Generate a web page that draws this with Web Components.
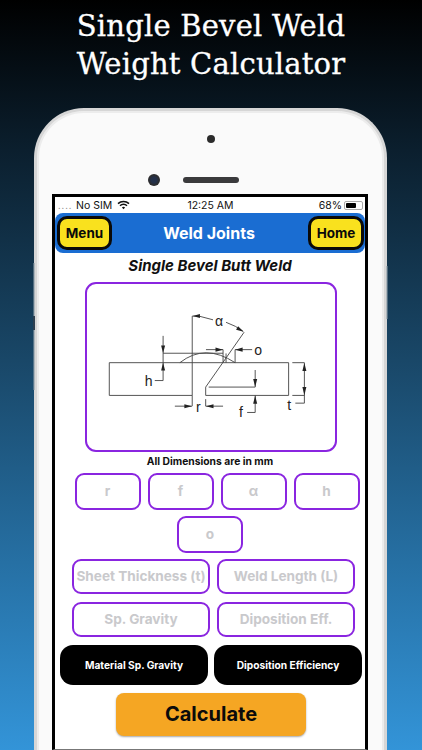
<!DOCTYPE html>
<html>
<head>
<meta charset="utf-8">
<style>
    html, body { margin: 0; padding: 0; }
    body { width: 422px; height: 750px; overflow: hidden; background: #000; font-family: "Inter", "Liberation Sans", sans-serif; }
</style>
</head>
<body>
<app-shot>
    <promo-title slot="title">Single Bevel Weld<br>Weight Calculator</promo-title>
    <phone-frame>
        <status-bar></status-bar>
        <nav-bar heading="Weld Joints"></nav-bar>
        <sheet-title>Single Bevel Butt Weld</sheet-title>
        <weld-diagram></weld-diagram>
        <sheet-note>All Dimensions are in mm</sheet-note>
        <field-row gap="7" top="4" nudge="14">
            <dim-field w="66" h="37">r</dim-field>
            <dim-field w="66" h="37">f</dim-field>
            <dim-field w="66" h="37">α</dim-field>
            <dim-field w="66" h="37">h</dim-field>
        </field-row>
        <field-row gap="7" top="6">
            <dim-field w="66" h="37">o</dim-field>
        </field-row>
        <field-row gap="7" top="6" nudge="7">
            <dim-field w="138" h="35">Sheet Thickness (t)</dim-field>
            <dim-field w="138" h="35">Weld Length (L)</dim-field>
        </field-row>
        <field-row gap="7" top="8" nudge="7">
            <dim-field w="138" h="35">Sp. Gravity</dim-field>
            <dim-field w="138" h="35">Diposition Eff.</dim-field>
        </field-row>
        <field-row gap="6" top="8" nudge="2">
            <pick-button>Material Sp. Gravity</pick-button>
            <pick-button>Diposition Efficiency</pick-button>
        </field-row>
        <field-row gap="0" top="8" nudge="2">
            <calc-button>Calculate</calc-button>
        </field-row>
    </phone-frame>
</app-shot>

<script>
class AppShot extends HTMLElement {
    constructor () {
        super();
        this.attachShadow({ mode: 'open' }).innerHTML = `
            <style>
                :host {
                    display: flex;
                    flex-direction: column;
                    width: 422px;
                    height: 750px;
                    overflow: hidden;
                    background: linear-gradient(180deg, #000 0%, #0b1f2e 20%, #1a4a6c 50%, #2670a4 75%, #3394d8 100%);
                }
                ::slotted(*) { flex: none; }
            </style>
            <slot name="title"></slot>
            <slot></slot>
        `;
    }
}

class PromoTitle extends HTMLElement {
    constructor () {
        super();
        this.attachShadow({ mode: 'open' }).innerHTML = `
            <style>
                :host {
                    display: block;
                    height: 108px;
                    box-sizing: border-box;
                    padding-top: 7px;
                    text-align: center;
                    color: #fff;
                    font-family: "DejaVu Serif", "Liberation Serif", serif;
                    font-size: 29px;
                    line-height: 38px;
                    letter-spacing: 0.2px;
                    -webkit-text-stroke: 0.3px #fff;
                }
            </style>
            <slot></slot>
        `;
    }
}

class PhoneFrame extends HTMLElement {
    constructor () {
        super();
        this.attachShadow({ mode: 'open' }).innerHTML = `
            <style>
                :host {
                    display: block;
                    position: relative;
                    width: 353px;
                    height: 700px;
                    margin-left: 34px;
                    box-sizing: border-box;
                    background: #fafafa;
                    border: 3px solid #d6d6d6;
                    border-bottom: 0;
                    border-radius: 50px 50px 0 0;
                    box-shadow: inset 0 0 0 2px #ececec;
                }
                .side { position: absolute; width: 2px; background: #8b9aa5; opacity: .55; }
                .left1 { left: -4px; top: 152px; height: 53px; }
                .left2 { left: -4px; top: 205px; height: 14px; background: #2d3f50; opacity: 1; }
                .left3 { left: -4px; top: 219px; height: 60px; }
                .right1 { right: -4px; top: 155px; height: 53px; }
                .bezel {
                    height: 83px;
                    box-sizing: border-box;
                    display: grid;
                    grid-template-columns: 1fr auto 1fr;
                    grid-template-rows: auto auto;
                    justify-items: center;
                    align-items: center;
                    padding-top: 15px;
                    row-gap: 14px;
                }
                .dot { grid-column: 2; width: 8px; height: 8px; border-radius: 50%; background: #2b2b2b; }
                .cam {
                    grid-column: 1;
                    grid-row: 2;
                    justify-self: end;
                    margin-right: 23px;
                    width: 12px;
                    height: 12px;
                    border-radius: 50%;
                    background: radial-gradient(circle, #23304a 0 30%, #2c2c2e 60%);
                }
                .speaker { grid-column: 2; grid-row: 2; width: 56px; height: 6px; border-radius: 3px; background: #3a3a3c; }
                .screen {
                    width: 316px;
                    height: 556px;
                    margin-left: 15px;
                    box-sizing: border-box;
                    background: #fff;
                    border: 3px solid #000;
                    border-bottom: 1px solid #777;
                    overflow: hidden;
                }
            </style>
            <div class="side left1"></div>
            <div class="side left2"></div>
            <div class="side left3"></div>
            <div class="side right1"></div>
            <div class="bezel">
                <div class="dot"></div>
                <div class="cam"></div>
                <div class="speaker"></div>
            </div>
            <div class="screen"><slot></slot></div>
        `;
    }
}

class StatusBar extends HTMLElement {
    constructor () {
        super();
        this.attachShadow({ mode: 'open' }).innerHTML = `
            <style>
                :host {
                    display: grid;
                    grid-template-columns: 1fr auto 1fr;
                    align-items: center;
                    height: 16px;
                    padding: 0 2px 0 3px;
                    font-size: 10.5px;
                    color: #111;
                }
                .left, .right { display: flex; align-items: center; gap: 3px; }
                .right { justify-content: flex-end; gap: 2px; }
                .dots { color: #999; font-size: 9px; width: 15px; letter-spacing: 1px; }
                .left svg { margin-left: 2px; }
                svg { display: block; }
                .batt { width: 19px; height: 9px; box-sizing: border-box; border: 1px solid #aaa; border-radius: 2px; padding: 1px; }
                .batt i { display: block; width: 68%; height: 100%; background: #000; border-radius: 1px; }
            </style>
            <div class="left">
                <span class="dots">....</span><span>No SIM</span>
                <svg width="13" height="10" viewBox="0 0 13 10"><path d="M1 3.6a8 8 0 0 1 11 0M3 5.8a5 5 0 0 1 7 0" fill="none" stroke="#111" stroke-width="1.5"/><path d="M4.9 7.4a2.4 2.4 0 0 1 3.2 0L6.5 9.2z" fill="#111"/></svg>
            </div>
            <div>12:25 AM</div>
            <div class="right"><span>68%</span><div class="batt"><i></i></div></div>
        `;
    }
}

class NavBar extends HTMLElement {
    constructor () {
        super();
        this.attachShadow({ mode: 'open' }).innerHTML = `
            <style>
                :host {
                    display: flex;
                    align-items: center;
                    justify-content: space-between;
                    height: 40px;
                    padding: 0 1px 0 2px;
                    box-sizing: border-box;
                    background: #1a6dd2;
                    border-radius: 8px;
                }
                .h { color: #fff; font-weight: 700; font-size: 16px; margin-left: -2px; }
                button {
                    width: 55px;
                    height: 34px;
                    padding: 0;
                    background: #f9e11e;
                    border: 3px solid #0a0a0a;
                    border-radius: 10px;
                    font: 700 13.5px "Inter", "Liberation Sans", sans-serif;
                    color: #0a0a0a;
                }
                button:last-child { width: 56px; }
            </style>
            <button>Menu</button>
            <div class="h"></div>
            <button>Home</button>
        `;
        this.shadowRoot.querySelector('.h').textContent = this.getAttribute('heading');
    }
}

class SheetTitle extends HTMLElement {
    constructor () {
        super();
        this.attachShadow({ mode: 'open' }).innerHTML = `
            <style>
                :host { display: block; text-align: center; height: 27px; line-height: 26px; font-size: 15px; font-weight: 700; font-style: italic; color: #111; }
            </style>
            <slot></slot>
        `;
    }
}

class WeldDiagram extends HTMLElement {
    constructor () {
        super();
        this.attachShadow({ mode: 'open' }).innerHTML = `
            <style>
                :host {
                    display: block;
                    width: 252px;
                    height: 170px;
                    margin: 2px 0 0 30px;
                    box-sizing: border-box;
                    border: 2.75px solid #8a25e0;
                    border-radius: 11px;
                    background: #fff;
                }
                svg { display: block; width: 100%; height: 100%; }
                text { font-family: "Liberation Sans", sans-serif; font-size: 14px; fill: #222; }
                .l { fill: none; stroke: #444; stroke-width: 0.9; }
                .a { fill: #222; stroke: none; }
            </style>
            <svg viewBox="87.5 284.5 247 165">
                <path class="l" d="M109.7 362.7H288.3V395.3H205.7V387L244 332.3M109.7 362.7V395.3H192.3V316.3H199"/>
                <path class="l" d="M180 362.7Q205 343 235 362.7"/>
                <path class="l" d="M208.7 387H255M163.3 353.3H223"/>
                <path class="l" d="M163.3 336V380.5H155M255 370V387M255 395.3V412.3H247"/>
                <path class="l" d="M192.3 395.3V406M205.7 399V406M175 406H192M205.7 406H223"/>
                <path class="l" d="M292 362.7H304V403H295M292 395.3H304"/>
                <path class="l" d="M206 349.7H223M252 349.7H235M223 349.7V362.7M235 349.7V362.7M226 353.5V362.7"/>
                <path class="l" d="M199 316.3L213 320M226 322.5Q236 326 243 331.5"/>
                <path class="a" d="M192.8 316.3L200 314.3V318.3Z"/>
                <path class="a" d="M243.5 331.8L236 330L238 326.5Z"/>
                <path class="a" d="M163.3 353L161.3 345.5H165.3Z"/>
                <path class="a" d="M163.3 362.7L161.3 370.5H165.3Z"/>
                <path class="a" d="M192 406L184.5 404V408Z"/>
                <path class="a" d="M206 406L213.5 404V408Z"/>
                <path class="a" d="M255 387L253 379H257Z"/>
                <path class="a" d="M255 395.5L253 403.5H257Z"/>
                <path class="a" d="M304 362.9L302 371H306Z"/>
                <path class="a" d="M304 395.1L302 387H306Z"/>
                <path class="a" d="M223 349.7L215.5 347.7V351.7Z"/>
                <path class="a" d="M235 349.7L242.5 347.7V351.7Z"/>
                <text x="215" y="326">α</text>
                <text x="254" y="355.5">o</text>
                <text x="145" y="386">h</text>
                <text x="196" y="411.5">r</text>
                <text x="239" y="417">f</text>
                <text x="287" y="410">t</text>
            </svg>
        `;
    }
}

class SheetNote extends HTMLElement {
    constructor () {
        super();
        this.attachShadow({ mode: 'open' }).innerHTML = `
            <style>
                :host { display: block; text-align: center; height: 17px; line-height: 19px; font-size: 10.3px; font-weight: 700; color: #111; }
            </style>
            <slot></slot>
        `;
    }
}

class FieldRow extends HTMLElement {
    constructor () {
        super();
        this.attachShadow({ mode: 'open' }).innerHTML = `
            <style>
                :host { display: flex; justify-content: center; }
            </style>
            <slot></slot>
        `;
        this.style.gap = this.getAttribute('gap') + 'px';
        this.style.marginTop = this.getAttribute('top') + 'px';
        this.style.paddingLeft = (this.getAttribute('nudge') || 0) + 'px';
    }
}

class DimField extends HTMLElement {
    constructor () {
        super();
        this.attachShadow({ mode: 'open' }).innerHTML = `
            <style>
                :host {
                    display: flex;
                    align-items: center;
                    justify-content: center;
                    box-sizing: border-box;
                    padding-bottom: 2px;
                    border: 2.75px solid #8a25e0;
                    border-radius: 9px;
                    color: #c9c9cc;
                    font-size: 13.6px;
                    font-weight: 700;
                    white-space: nowrap;
                }
            </style>
            <slot></slot>
        `;
        this.style.width = this.getAttribute('w') + 'px';
        this.style.height = this.getAttribute('h') + 'px';
    }
}

class PickButton extends HTMLElement {
    constructor () {
        super();
        this.attachShadow({ mode: 'open' }).innerHTML = `
            <style>
                :host {
                    display: flex;
                    align-items: center;
                    justify-content: center;
                    width: 148px;
                    height: 40px;
                    background: #000;
                    border-radius: 13px;
                    color: #fff;
                    font-size: 10.2px;
                    font-weight: 700;
                }
            </style>
            <slot></slot>
        `;
    }
}

class CalcButton extends HTMLElement {
    constructor () {
        super();
        this.attachShadow({ mode: 'open' }).innerHTML = `
            <style>
                :host {
                    display: flex;
                    align-items: center;
                    justify-content: center;
                    width: 190px;
                    height: 43px;
                    box-sizing: border-box;
                    padding-bottom: 1px;
                    background: #f5a623;
                    border-radius: 8px;
                    box-shadow: 0 1px 2px rgba(0, 0, 0, .35);
                    color: #0b0b0b;
                    font-size: 20px;
                    font-weight: 700;
                }
            </style>
            <slot></slot>
        `;
    }
}

customElements.define('app-shot', AppShot);
customElements.define('promo-title', PromoTitle);
customElements.define('phone-frame', PhoneFrame);
customElements.define('status-bar', StatusBar);
customElements.define('nav-bar', NavBar);
customElements.define('sheet-title', SheetTitle);
customElements.define('weld-diagram', WeldDiagram);
customElements.define('sheet-note', SheetNote);
customElements.define('field-row', FieldRow);
customElements.define('dim-field', DimField);
customElements.define('pick-button', PickButton);
customElements.define('calc-button', CalcButton);
</script>
</body>
</html>
